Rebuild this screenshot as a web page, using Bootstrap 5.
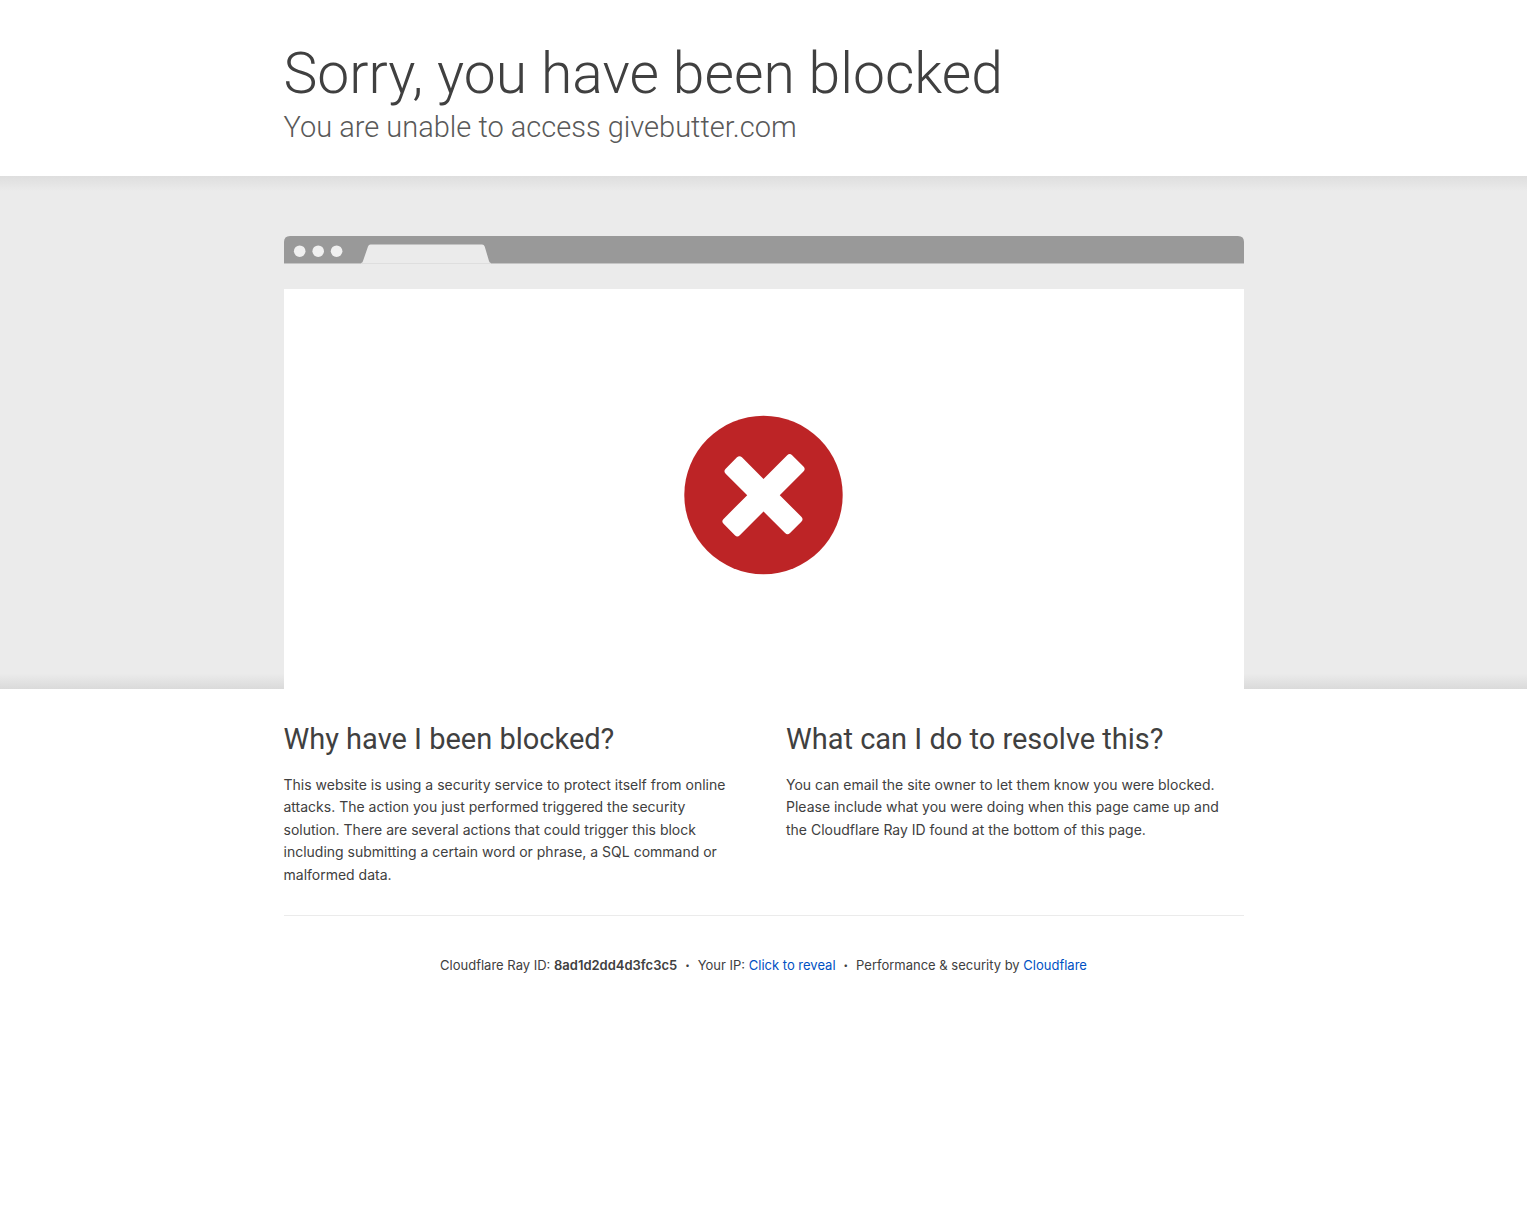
<!DOCTYPE html>
<html lang="en">
<head>
<meta charset="utf-8">
<meta name="viewport" content="width=device-width, initial-scale=1">
<title>Attention Required! | Cloudflare</title>
<link href="https://cdn.jsdelivr.net/npm/bootstrap@5.3.0/dist/css/bootstrap.min.css" rel="stylesheet">
<style>
body { font-family: Inter, "Liberation Sans", sans-serif; color: #404040; background: #fff; font-size: 14px; line-height: 1.6; }
.wrapper { max-width: 960px; width: 100%; }
.page-title, .page-subtitle, .section-title { font-family: Roboto, Inter, sans-serif; }
.page-title { font-size: 57px; line-height: 72px; font-weight: 300; }
.page-subtitle { font-size: 29px; line-height: 35px; font-weight: 300; color: #595959; }
.page-head { padding: 38px 0 31px; }
.stage { background: #ebebeb linear-gradient(to bottom, #dedede, #ebebeb 3%, #ebebeb 97%, #dadada); padding-top: 60px; }
.browser-bar { display: block; width: 100%; height: 53px; }
.screen { height: 400px; padding-top: 12px; }
.block-icon { width: 160px; height: 160px; }
.section-title { font-size: 29px; line-height: 39px; font-weight: 400; margin-bottom: 15px; }
.columns { --bs-gutter-x: 45px; padding: 31px 0 29px; }
.page-foot { border-top: 1px solid #ebebeb; padding: 39px 0; font-size: 13px; line-height: 20px; }
.foot-link { color: #0051c3; font-size: inherit; line-height: inherit; vertical-align: baseline; }
.foot-dot { font-size: 8px; }
</style>
</head>
<body>
<header class="page-head">
  <div class="wrapper mx-auto">
    <h1 class="page-title m-0">Sorry, you have been blocked</h1>
    <h2 class="page-subtitle m-0">You are unable to access givebutter.com</h2>
  </div>
</header>
<main>
  <section class="stage">
    <div class="wrapper mx-auto">
      <svg class="browser-bar" viewBox="0 0 960 53" preserveAspectRatio="none" aria-hidden="true">
        <path fill="#999" d="M0 27V6q0-6 6-6h948q6 0 6 6v21z"/>
        <path fill="#c4c4c4" d="M0 27h960v1H0z"/>
        <g fill="#f0f0f0"><circle cx="15.700" cy="15.200" r="5.800"/><circle cx="34.200" cy="15.200" r="5.800"/><circle cx="52.600" cy="15.200" r="5.800"/></g>
        <path fill="#ebebeb" d="M77 27q1.500 0 2-2l5-14.500q.7-2 2.500-2h111.500q2 0 2.700 2l4.300 14.500q.5 2 2 2z"/>
        <path fill="#dedede" d="M77 27h130v1H77z"/>
      </svg>
      <div class="screen bg-white d-flex align-items-center justify-content-center">
        <svg class="block-icon" viewBox="0 0 160 160" role="img" aria-label="Blocked">
          <circle cx="79.500" cy="80" r="79.200" fill="#bd2426"/>
          <g fill="#fff" transform="translate(79.500 80.200)">
            <rect x="-48.500" y="-11.500" width="97" height="23" rx="3.500" transform="rotate(-45)"/>
            <rect x="-45.500" y="-11.500" width="91" height="23" rx="3.500" transform="rotate(45)"/>
          </g>
        </svg>
      </div>
    </div>
  </section>
  <section class="wrapper mx-auto">
    <div class="row columns">
      <div class="col-md-6">
        <h2 class="section-title">Why have I been blocked?</h2>
        <p class="m-0">This website is using a security service to protect itself from online attacks. The action you just performed triggered the security solution. There are several actions that could trigger this block including submitting a certain word or phrase, a SQL command or malformed data.</p>
      </div>
      <div class="col-md-6">
        <h2 class="section-title">What can I do to resolve this?</h2>
        <p class="m-0">You can email the site owner to let them know you were blocked. Please include what you were doing when this page came up and the Cloudflare Ray ID found at the bottom of this page.</p>
      </div>
    </div>
  </section>
</main>
<footer class="wrapper mx-auto page-foot d-flex flex-wrap justify-content-center">
  <span>Cloudflare Ray ID: <strong class="fw-semibold">8ad1d2dd4d3fc3c5</strong></span>
  <span class="foot-dot px-2">•</span>
  <span>Your IP: <button type="button" class="btn btn-link foot-link border-0 p-0 text-decoration-none">Click to reveal</button></span>
  <span class="foot-dot px-2">•</span>
  <span>Performance &amp; security by <a class="foot-link text-decoration-none" href="#">Cloudflare</a></span>
</footer>
<script src="https://cdn.jsdelivr.net/npm/bootstrap@5.3.0/dist/js/bootstrap.bundle.min.js"></script>
</body>
</html>
